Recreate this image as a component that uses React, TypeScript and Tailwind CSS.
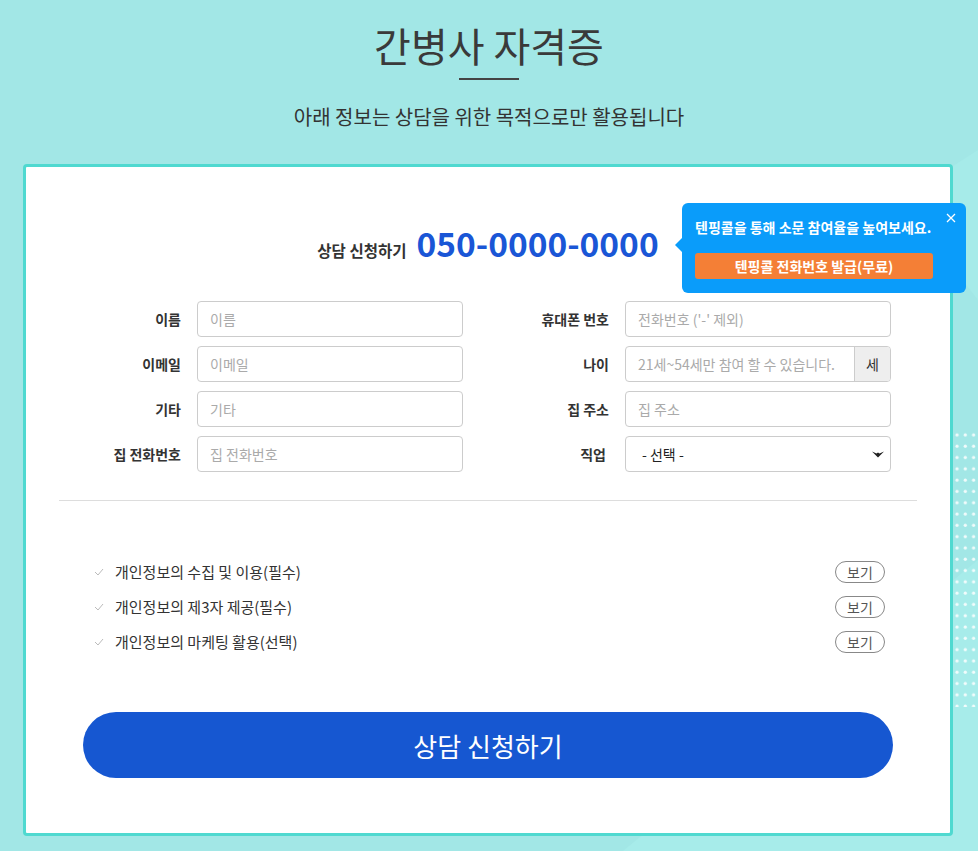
import React from "react";

const font = { fontFamily: '"Noto Sans CJK KR", "Noto Sans", sans-serif' };

function Field({ label, placeholder }: { label: string; placeholder: string }) {
  return (
    <div className="flex items-center h-[36px]">
      <div className="w-[122px] text-right text-[14px] font-bold text-[#333]">{label}</div>
      <div className="ml-[16px] w-[266px] h-[36px] border border-[#ccc] rounded-[4px] flex items-center px-[12px] text-[14px] text-[#aaa]">
        {placeholder}
      </div>
    </div>
  );
}

function Check() {
  return (
    <svg width="10" height="8" viewBox="0 0 10 8" className="shrink-0">
      <polyline points="1,4 4,7 9,1" fill="none" stroke="#bbb" strokeWidth="1" />
    </svg>
  );
}

function Agree({ text }: { text: string }) {
  return (
    <div className="flex items-center h-[22px]">
      <div className="w-[21px] flex items-center">
        <Check />
      </div>
      <div className="text-[15px] text-[#333] flex-1">{text}</div>
      <div className="w-[50px] h-[22px] border border-[#888] rounded-full flex items-center justify-center text-[14px] text-[#555]">
        보기
      </div>
    </div>
  );
}

export default function App() {
  return (
    <div className="relative min-h-[851px] bg-[#a2e7e6] overflow-hidden" style={font}>
      <svg className="absolute inset-0 pointer-events-none" width="978" height="851">
        <polygon points="623,851 978,851 978,560" fill="#a7ecea" />
        <polygon points="900,200 978,150 978,300" fill="#a6ebe9" />
        <defs>
          <pattern id="dots" x="953" y="430" width="8.3" height="11.3" patternUnits="userSpaceOnUse">
            <circle cx="4" cy="5" r="1.6" fill="#ffffff" opacity="0.85" />
          </pattern>
        </defs>
        <rect x="950" y="432" width="28" height="275" fill="url(#dots)" />
      </svg>

      <div className="relative">
        <div className="pt-[18px] text-center text-[40px] leading-[54px] text-[#3a3a3a]">간병사 자격증</div>
        <div className="mx-auto mt-[6px] w-[60px] h-[2px] bg-[#444]" />
        <div className="mt-[23px] text-center text-[20px] leading-[28px] text-[#333]">
          아래 정보는 상담을 위한 목적으로만 활용됩니다
        </div>

        <div className="relative ml-[23px] mt-[33px] w-[930px] h-[672px] border-[3px] border-[#4fd9d0] rounded-[4px] bg-white px-[33px] pt-[58px]">
          <div className="flex items-baseline justify-center h-[36px]">
            <span className="text-[15.5px] font-bold text-[#333]">상담 신청하기</span>
            <span className="ml-[10px] text-[33.5px] leading-[36px] font-bold text-[#1a56d6]">050-0000-0000</span>
          </div>

          <div className="mt-[40px] grid grid-cols-[404px_404px] gap-x-[24px] gap-y-[9px]">
            <Field label="이름" placeholder="이름" />
            <Field label="휴대폰 번호" placeholder="전화번호 ('-' 제외)" />
            <Field label="이메일" placeholder="이메일" />
            <div className="flex items-center h-[36px]">
              <div className="w-[122px] text-right text-[14px] font-bold text-[#333]">나이</div>
              <div className="ml-[16px] w-[266px] h-[36px] border border-[#ccc] rounded-[4px] flex overflow-hidden">
                <div className="flex-1 flex items-center px-[12px] text-[14px] text-[#aaa]">21세~54세만 참여 할 수 있습니다.</div>
                <div className="w-[36px] bg-[#eee] border-l border-[#ccc] flex items-center justify-center text-[14px] text-[#333]">세</div>
              </div>
            </div>
            <Field label="기타" placeholder="기타" />
            <Field label="집 주소" placeholder="집 주소" />
            <Field label="집 전화번호" placeholder="집 전화번호" />
            <div className="flex items-center h-[36px]">
              <div className="w-[122px] text-right text-[14px] font-bold text-[#333] pr-[3px]">직업</div>
              <div className="ml-[16px] w-[266px] h-[36px] border border-[#ccc] rounded-[4px] flex items-center pl-[16px] pr-[6px] text-[14px] text-[#222]">
                <span className="flex-1">- 선택 -</span>
                <svg width="12" height="7" viewBox="0 0 12 7">
                  <path d="M0 0.5 L4.5 2.5 L6 1.5 L7.5 2.5 L12 0.5 L6 6.5 Z" fill="#222" />
                </svg>
              </div>
            </div>
          </div>

          <div className="mt-[28px] h-px bg-[#ddd]" />

          <div className="mt-[60px] pl-[35px] pr-[32px] flex flex-col gap-[13px]">
            <Agree text="개인정보의 수집 및 이용(필수)" />
            <Agree text="개인정보의 제3자 제공(필수)" />
            <Agree text="개인정보의 마케팅 활용(선택)" />
          </div>

          <div className="mt-[59px] mx-[24px] h-[66px] rounded-full bg-[#1657d1] flex items-center justify-center text-white text-[26px]">
            상담 신청하기
          </div>

          <div className="absolute left-[656px] top-[36px] w-[284px] h-[90px] rounded-[6px] bg-[#0a9cfa] z-10">
            <div className="absolute -left-[7px] top-[35px] w-0 h-0 border-t-[7px] border-t-transparent border-b-[7px] border-b-transparent border-r-[7px] border-r-[#0a9cfa]" />
            <svg className="absolute right-[10px] top-[10px]" width="10" height="10" viewBox="0 0 10 10">
              <path d="M1 1 L9 9 M9 1 L1 9" stroke="white" strokeWidth="1.3" />
            </svg>
            <div className="pt-[14px] pl-[13px] text-[14px] leading-[20px] font-bold text-white">
              텐핑콜을 통해 소문 참여율을 높여보세요.
            </div>
            <div className="ml-[13px] mt-[16px] w-[238px] h-[26px] rounded-[3px] bg-[#f47f36] flex items-center justify-center text-[14px] font-bold text-white">
              텐핑콜 전화번호 발급(무료)
            </div>
          </div>
        </div>
      </div>
    </div>
  );
}
